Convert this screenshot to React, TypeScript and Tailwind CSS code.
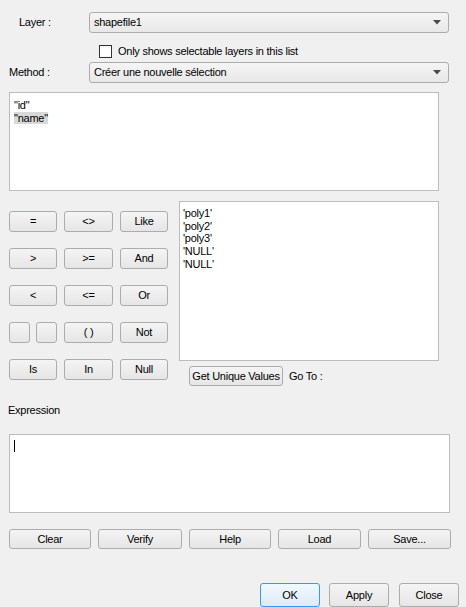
import React from "react";

const btn =
  "flex items-center justify-center whitespace-nowrap border border-[#acacac] rounded-[3px] bg-gradient-to-b from-[#f4f4f4] to-[#e6e6e6] text-black";

function Btn({ label, className }: { label: string; className: string }) {
  return <div className={`${btn} ${className}`}>{label}</div>;
}

function Combo({ value }: { value: string }) {
  return (
    <div className="flex items-center w-[360px] h-[21px] border border-[#acacac] rounded-[3px] bg-gradient-to-b from-[#f5f5f5] to-[#e8e8e8] pl-[4px] pr-[7px]">
      <span className="flex-1">{value}</span>
      <svg width="8" height="5" viewBox="0 0 8 5">
        <path d="M0 0 H8 L4 4.5 Z" fill="#4a4a4a" />
      </svg>
    </div>
  );
}

const ops = [
  ["=", "<>", "Like"],
  [">", ">=", "And"],
  ["<", "<=", "Or"],
  [null, "( )", "Not"],
  ["Is", "In", "Null"],
];

const values = ["'poly1'", "'poly2'", "'poly3'", "'NULL'", "'NULL'"];

export default function App() {
  return (
    <div
      className="w-[466px] h-[607px] bg-[#f0f0f0] text-[11px] tracking-[-0.25px] text-black overflow-hidden flex flex-col"
      style={{ fontFamily: '"Liberation Sans", Arial, sans-serif' }}
    >
      {/* Layer */}
      <div className="flex items-center mt-[12px] h-[21px]">
        <span className="w-[89px] pl-[19px]">Layer :</span>
        <Combo value="shapefile1" />
      </div>

      {/* Checkbox */}
      <div className="flex items-center mt-[12px] h-[13px] pl-[99px]">
        <div className="w-[13px] h-[13px] border border-[#333] bg-white" />
        <span className="ml-[6px]">Only shows selectable layers in this list</span>
      </div>

      {/* Method */}
      <div className="flex items-center mt-[4px] h-[21px]">
        <span className="w-[89px] pl-[9px]">Method :</span>
        <Combo value="Créer une nouvelle sélection" />
      </div>

      {/* Fields */}
      <div className="ml-[9px] mt-[9px] w-[430px] h-[100px] bg-white border border-[#bcbcbc] pl-[4px] pt-[6px] leading-[13px]">
        <div className="h-[13px]">"id"</div>
        <div className="h-[13px]">
          <span className="bg-[#d9d9d9] inline-block leading-[12px]">"name"</span>
        </div>
      </div>

      {/* Operators + values */}
      <div className="flex mt-[10px] h-[185px]">
        <div className="ml-[9px] mt-[10px] w-[159px] flex flex-col gap-[16px]">
          {ops.map((row, i) => (
            <div key={i} className="flex h-[21px] gap-[7px]">
              {row[0] === null ? (
                <div className="flex w-[48px] justify-between">
                  <Btn label="" className="w-[21px] h-[21px]" />
                  <Btn label="" className="w-[21px] h-[21px]" />
                </div>
              ) : (
                <Btn label={row[0]} className="w-[48px] h-[21px]" />
              )}
              <Btn label={row[1] as string} className="w-[49px] h-[21px]" />
              <Btn label={row[2] as string} className="w-[48px] h-[21px]" />
            </div>
          ))}
        </div>
        <div className="ml-[11px] flex flex-col">
          <div className="w-[260px] h-[160px] bg-white border border-[#bcbcbc] pl-[3px] pt-[5px] leading-[12.7px]">
            {values.map((v, i) => (
              <div key={i}>{v}</div>
            ))}
          </div>
          <div className="flex items-center mt-[5px] h-[20px]">
            <Btn label="Get Unique Values" className="ml-[10px] w-[94px] h-[20px]" />
            <span className="ml-[6px]">Go To :</span>
          </div>
        </div>
      </div>

      {/* Expression */}
      <div className="pl-[8px] mt-[17px] h-[14px] leading-[14px]">Expression</div>
      <div className="ml-[9px] mt-[17px] w-[441px] h-[80px] bg-white border border-[#bcbcbc] pl-[4px] pt-[5px]">
        <div className="w-px h-[12px] bg-black" />
      </div>

      <div className="flex mt-[16px] ml-[9px] h-[20px] gap-[7px]">
        <Btn label="Clear" className="w-[82px] h-[20px]" />
        <Btn label="Verify" className="w-[84px] h-[20px]" />
        <Btn label="Help" className="w-[82px] h-[20px]" />
        <Btn label="Load" className="w-[83px] h-[20px]" />
        <Btn label="Save..." className="w-[83px] h-[20px]" />
      </div>

      <div className="flex mt-[34px] ml-[260px] h-[24px] gap-[9px]">
        <div className="flex items-center justify-center w-[60px] h-[24px] border border-[#3399ff] rounded-[3px] bg-gradient-to-b from-[#f1f8fe] to-[#dcecfc]">
          OK
        </div>
        <Btn label="Apply" className="w-[60px] h-[24px]" />
        <Btn label="Close" className="w-[60px] h-[24px] ml-[1px]" />
      </div>
    </div>
  );
}
